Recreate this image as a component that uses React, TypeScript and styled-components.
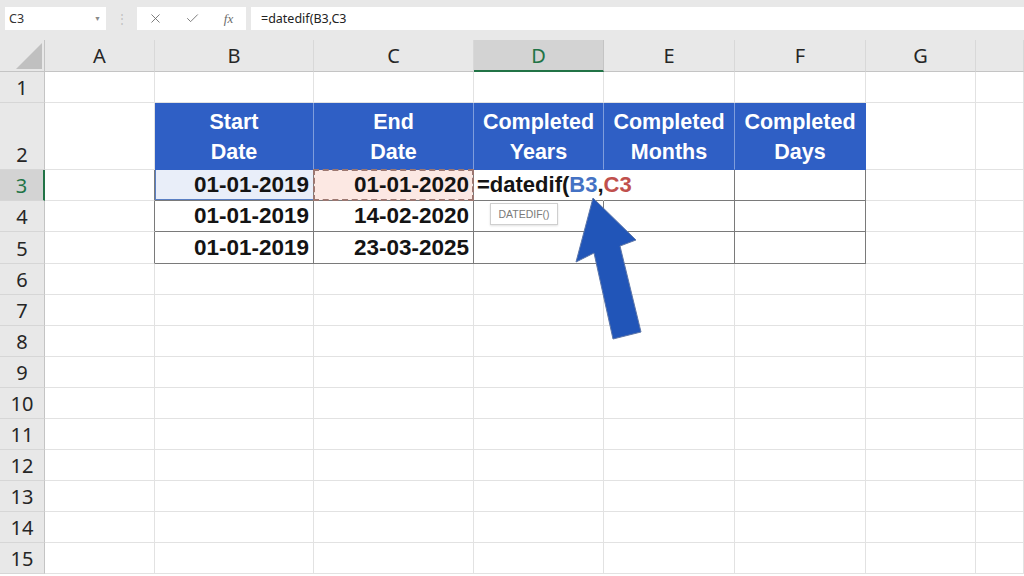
import React from "react";
import styled, { createGlobalStyle, css } from "styled-components";
import { X, Check } from "lucide-react";

const GlobalStyle = createGlobalStyle`
  html, body { margin: 0; padding: 0; background: #ffffff; overflow: hidden; }
  body { font-family: "Noto Sans", "Open Sans", sans-serif; }
  * { box-sizing: border-box; }
`;

const Page = styled.div`
  position: relative;
  width: 1024px;
  height: 576px;
  overflow: hidden;
  background: #ffffff;
`;

const FormulaBar = styled.div`
  height: 40px;
  background: #e8e8e8;
  display: flex;
  align-items: flex-start;
  padding-top: 7px;
`;

const NameBox = styled.div`
  margin-left: 5px;
  width: 101px;
  height: 23px;
  background: #fff;
  display: flex;
  align-items: center;
  justify-content: space-between;
  padding: 0 5px 0 4px;
  font-size: 12.5px;
  color: #333;
`;

const Caret = styled.span`
  font-size: 7px;
  color: #8a8a8a;
`;

const Grip = styled.div`
  width: 31px;
  height: 23px;
  display: flex;
  justify-content: center;
  align-items: center;
  color: #c2c2c2;
  font-size: 12px;
`;

const IconBox = styled.div`
  width: 109px;
  height: 23px;
  background: #fff;
  display: grid;
  grid-template-columns: 36px 38px 35px;
  align-items: center;
  justify-items: center;
  color: #6b6b6b;
`;

const Fx = styled.span`
  font-family: "Liberation Serif", "DejaVu Serif", serif;
  font-style: italic;
  font-size: 13px;
  color: #6b6b6b;
`;

const FormulaInput = styled.div`
  margin-left: 5px;
  flex: 1;
  height: 23px;
  background: #fff;
  display: flex;
  align-items: center;
  padding-left: 10px;
  font-size: 12.5px;
  color: #222;
`;

const Sheet = styled.div`
  display: grid;
  grid-template-columns: 45px 110px 159px 160px 130px 131px 131px 110px 1fr;
  grid-template-rows: 32px 31px 67px 31px 31px 32px repeat(10, 31px);
`;

const baseCell = css`
  border-right: 1px solid #e2e2e2;
  border-bottom: 1px solid #e2e2e2;
  display: flex;
  min-width: 0;
`;

const Corner = styled.div`
  ${baseCell};
  background: #e8e8e8;
  border-right: 1px solid #c4c4c4;
  border-bottom: 1px solid #c4c4c4;
  position: relative;
  &::after {
    content: "";
    position: absolute;
    right: 2px;
    bottom: 2px;
    width: 0;
    height: 0;
    border-left: 26px solid transparent;
    border-bottom: 26px solid #c0c0c0;
  }
`;

const ColHead = styled.div<{ $active?: boolean }>`
  ${baseCell};
  background: ${(p) => (p.$active ? "#d3d3d3" : "#e8e8e8")};
  border-right: 1px solid ${(p) => (p.$active ? "#c4c4c4" : "#d8d8d8")};
  border-bottom: ${(p) => (p.$active ? "2px solid #217346" : "1px solid #c4c4c4")};
  color: ${(p) => (p.$active ? "#217346" : "#262626")};
  align-items: center;
  justify-content: center;
  font-size: 20px;
  padding-top: ${(p) => (p.$active ? "1px" : "0")};
`;

const RowHead = styled.div<{ $active?: boolean }>`
  ${baseCell};
  background: ${(p) => (p.$active ? "#d3d3d3" : "#e8e8e8")};
  border-right: ${(p) => (p.$active ? "2px solid #217346" : "1px solid #c4c4c4")};
  border-bottom: 1px solid #d6d6d6;
  color: ${(p) => (p.$active ? "#217346" : "#262626")};
  align-items: flex-end;
  justify-content: center;
  font-size: 20px;
  line-height: 29px;
`;

const Cell = styled.div<{ $edgeRight?: boolean }>`
  ${baseCell};
  ${(p) => p.$edgeRight && css`border-right: 1px solid #7a7a7a;`}
`;

const HeadCell = styled.div<{ $last?: boolean }>`
  ${baseCell};
  background: #2f5fc5;
  border-right: 1px solid ${(p) => (p.$last ? "#2f5fc5" : "#7f9ddc")};
  border-bottom: 1px solid #2f5fc5;
  color: #ffffff;
  font-family: "Liberation Sans", Arial, sans-serif;
  font-weight: 700;
  font-size: 21.5px;
  line-height: 30px;
  text-align: center;
  align-items: center;
  justify-content: center;
  padding-top: 1px;
`;

type Mark = "none" | "blue" | "red";

const DataCell = styled.div<{ $mark?: Mark }>`
  ${baseCell};
  border-right: 1px solid #7a7a7a;
  border-bottom: 1px solid #7a7a7a;
  align-items: center;
  justify-content: flex-end;
  padding-right: 4px;
  font-family: "Liberation Sans", Arial, sans-serif;
  font-weight: 700;
  font-size: 22.5px;
  color: #141414;
  position: relative;
  ${(p) =>
    p.$mark === "blue" &&
    css`
      background: #e9eef9;
      box-shadow: inset 1px 0 0 #5a7fc4, inset 0 -1px 0 #5a7fc4;
    `}
  ${(p) =>
    p.$mark === "red" &&
    css`
      background: #fce8e3;
      z-index: 3;
      &::after {
        content: "";
        position: absolute;
        left: -1px;
        top: -1px;
        right: -1px;
        bottom: -1px;
        border: 2px dashed #9c7771;
        pointer-events: none;
      }
    `}
`;

const FormulaCell = styled.div`
  ${baseCell};
  border-right: 1px solid transparent;
  border-bottom: 1px solid #7a7a7a;
  align-items: center;
  padding-left: 3px;
  font-family: "Liberation Sans", Arial, sans-serif;
  font-weight: 700;
  font-size: 22px;
  color: #141414;
  white-space: nowrap;
  overflow: visible;
  position: relative;
  z-index: 2;
`;

const Ref = styled.span<{ $color: string }>`
  color: ${(p) => p.$color};
`;

const TextCaret = styled.span`
  display: inline-block;
  width: 1px;
  height: 23px;
  background: #222;
  margin-left: 1px;
  vertical-align: middle;
`;

const Tooltip = styled.div`
  position: absolute;
  left: 16px;
  top: 33px;
  width: 68px;
  height: 22px;
  background: #ffffff;
  border: 1px solid #cfcfcf;
  box-shadow: 0 1px 2px rgba(0, 0, 0, 0.12);
  font-family: "Liberation Sans", Arial, sans-serif;
  font-weight: 400;
  font-size: 10.5px;
  color: #7a7a7a;
  display: flex;
  align-items: center;
  justify-content: center;
`;

const ArrowLayer = styled.svg`
  position: absolute;
  left: 0;
  top: 0;
  pointer-events: none;
  z-index: 5;
`;

const letters = ["A", "B", "C", "D", "E", "F", "G", ""];
const dataRows: [string, string][] = [
  ["01-01-2019", "01-01-2020"],
  ["01-01-2019", "14-02-2020"],
  ["01-01-2019", "23-03-2025"],
];

const heads = [
  ["Start", "Date"],
  ["End", "Date"],
  ["Completed", "Years"],
  ["Completed", "Months"],
  ["Completed", "Days"],
];

export default function App() {
  const cells: React.ReactNode[] = [];

  cells.push(<Corner key="corner" />);
  letters.forEach((l, i) => {
    cells.push(
      <ColHead key={`ch${i}`} $active={l === "D"}>
        {l}
      </ColHead>
    );
  });

  cells.push(<RowHead key="rh1">1</RowHead>);
  for (let c = 0; c < 8; c++) cells.push(<Cell key={`r1c${c}`} />);

  cells.push(<RowHead key="rh2">2</RowHead>);
  cells.push(<Cell key="r2a" />);
  heads.forEach((h, i) => {
    cells.push(
      <HeadCell key={`hd${i}`} $last={i === heads.length - 1}>
        {h[0]}
        <br />
        {h[1]}
      </HeadCell>
    );
  });
  cells.push(<Cell key="r2g" />);
  cells.push(<Cell key="r2h" />);

  dataRows.forEach((row, r) => {
    const n = r + 3;
    cells.push(
      <RowHead key={`rh${n}`} $active={n === 3}>
        {n}
      </RowHead>
    );
    cells.push(<Cell key={`r${n}a`} $edgeRight />);
    cells.push(
      <DataCell key={`r${n}b`} $mark={n === 3 ? "blue" : "none"}>
        {row[0]}
      </DataCell>
    );
    cells.push(
      <DataCell key={`r${n}c`} $mark={n === 3 ? "red" : "none"}>
        {row[1]}
      </DataCell>
    );
    if (n === 3) {
      cells.push(
        <FormulaCell key="r3d">
          =datedif(<Ref $color="#4472c4">B3</Ref>,<Ref $color="#c0504d">C3</Ref>
          <TextCaret />
          <Tooltip>DATEDIF()</Tooltip>
        </FormulaCell>
      );
    } else {
      cells.push(<DataCell key={`r${n}d`} />);
    }
    cells.push(<DataCell key={`r${n}e`} />);
    cells.push(<DataCell key={`r${n}f`} />);
    cells.push(<Cell key={`r${n}g`} />);
    cells.push(<Cell key={`r${n}h`} />);
  });

  for (let n = 6; n <= 15; n++) {
    cells.push(<RowHead key={`rh${n}`}>{n}</RowHead>);
    for (let c = 0; c < 8; c++) cells.push(<Cell key={`r${n}c${c}`} />);
  }

  return (
    <Page>
      <GlobalStyle />
      <FormulaBar>
        <NameBox>
          C3
          <Caret>▼</Caret>
        </NameBox>
        <Grip>⋮</Grip>
        <IconBox>
          <X size={15} strokeWidth={1.4} />
          <Check size={15} strokeWidth={1.4} />
          <Fx>fx</Fx>
        </IconBox>
        <FormulaInput>=datedif(B3,C3</FormulaInput>
      </FormulaBar>
      <Sheet>{cells}</Sheet>
      <ArrowLayer width={1024} height={576} viewBox="0 0 1024 576">
        <polygon
          points="593,198 636,240 620,246 641,332 613,339 594,253 576,262"
          fill="#2155b8"
          stroke="#5d76a8"
          strokeWidth={1}
          strokeLinejoin="round"
        />
      </ArrowLayer>
    </Page>
  );
}
